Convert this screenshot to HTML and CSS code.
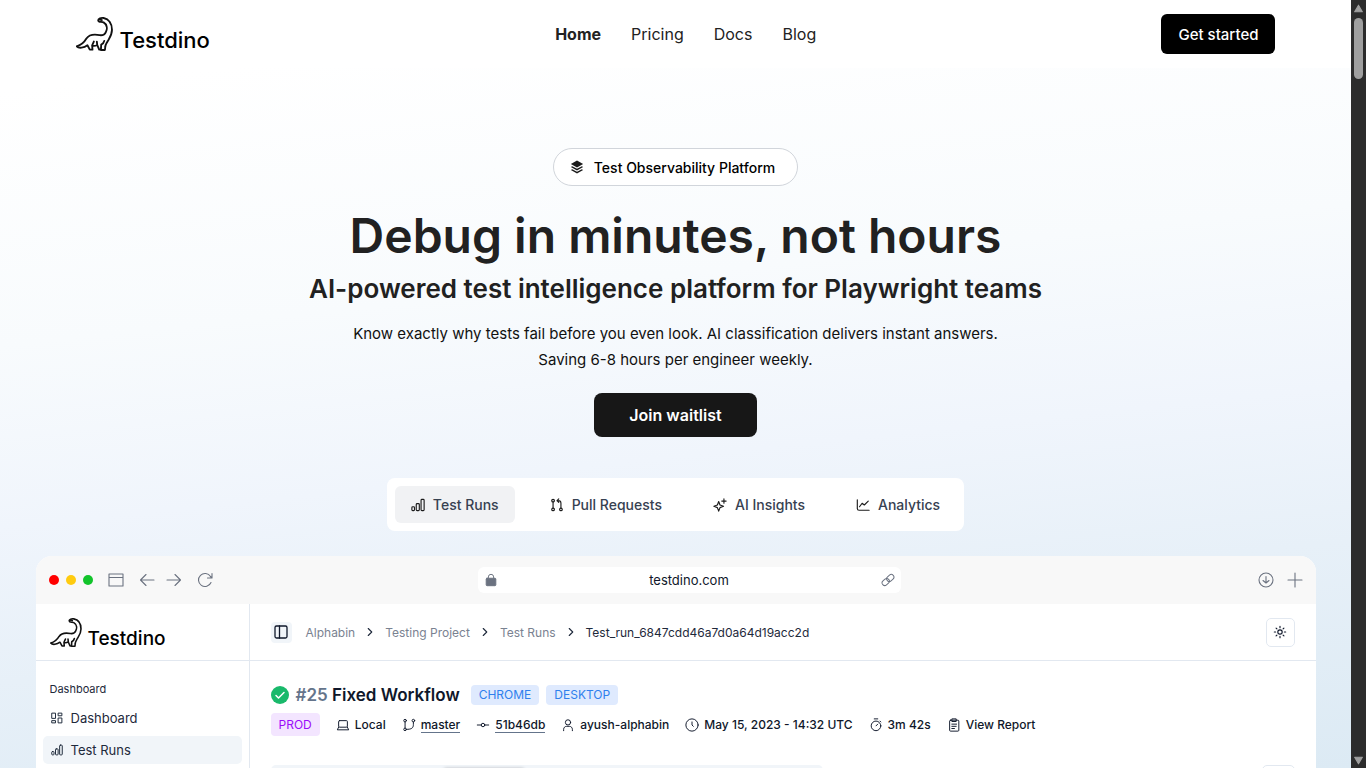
FILE: index.html
```html
<!DOCTYPE html>
<html lang="en">
<head>
    <meta charset="UTF-8" />
    <meta name="viewport" content="width=device-width, initial-scale=1.0" />
    <title>Testdino</title>
    <link rel="stylesheet" href="styles.css">
</head>
<body>
    <!-- Shared icons -->
    <svg class="sprite" aria-hidden="true">
        <symbol id="dino" viewBox="0 0 110 104">
            <path d="M66 10C66 4 74 2 82 3C98 6 107 20 107 38C107 54 100 62 94 72C91 78 87 82 87 89L86 98H74L75 82M66 10C67 17 76 13 82 16C92 22 94 34 89 44C86 52 78 55 70 54C50 50 38 54 31 64C24 76 14 84 2 87C8 94 24 92 34 84L41 97H49L48 84L53 73M48 85C54 87 58 86 63 83L69 97H75M63 83L62 73M75 82C80 80 83 76 84 71M72 8L77 9" />
        </symbol>
        <symbol id="bars" viewBox="0 0 16 16">
            <rect x="1" y="10" width="3" height="4.5" rx="1" />
            <rect x="6" y="6.500" width="3.500" height="8" rx="1" />
            <rect x="11.500" y="1.500" width="3.500" height="13" rx="1" />
        </symbol>
        <symbol id="chevron" viewBox="0 0 16 16">
            <path d="M6 4l4 4-4 4" />
        </symbol>
    </svg>

    <div class="page">
        <header class="site-header">
            <a class="logo" href="#"><svg class="dino"><use href="#dino" /></svg>Testdino</a>
            <nav class="site-nav">
                <a class="active" href="#">Home</a>
                <a href="#">Pricing</a>
                <a href="#">Docs</a>
                <a href="#">Blog</a>
            </nav>
            <button class="get-started" type="button">Get started</button>
        </header>

        <main>
            <section class="hero">
                <div class="badge">
                    <svg class="icon solid" viewBox="0 0 16 16"><path d="M8 .5L15 4.500 8 8.500 1 4.500zM2.500 7L8 10l5.500-3L15 8 8 12 1 8zM2.500 10.500L8 13.500l5.500-3 1.500 1L8 15.500 1 11.500z" /></svg>
                    Test Observability Platform
                </div>
                <h1>Debug in minutes, not hours</h1>
                <h2>AI-powered test intelligence platform for Playwright teams</h2>
                <p>Know exactly why tests fail before you even look. AI classification delivers instant answers.<br>Saving 6-8 hours per engineer weekly.</p>
                <button class="waitlist" type="button">Join waitlist</button>
            </section>

            <div class="tabs">
                <button class="tab selected" type="button"><svg class="icon"><use href="#bars" /></svg>Test Runs</button>
                <button class="tab" type="button">
                    <svg class="icon" viewBox="0 0 16 16"><circle cx="3.500" cy="3" r="1.500" /><circle cx="3.500" cy="13" r="1.500" /><circle cx="12.500" cy="13" r="1.500" /><path d="M3.500 4.500v7M12.500 11.500V6c0-2-1-3-3-3H8M10 1L8 3l2 2" /></svg>
                    Pull Requests
                </button>
                <button class="tab" type="button">
                    <svg class="icon" viewBox="0 0 16 16"><path d="M6.500 4L8 8l4 1.500L8 11l-1.500 4L5 11 1 9.500 5 8zM12.500 1v5M10 3.500h5" /></svg>
                    AI Insights
                </button>
                <button class="tab" type="button">
                    <svg class="icon" viewBox="0 0 16 16"><path d="M1.500 2v10c0 1.500.5 2 2 2H15M4 10l3-4 2.500 2L14 3.500" /></svg>
                    Analytics
                </button>
            </div>

            <section class="browser">
                <div class="browser-bar">
                    <div class="browser-left">
                        <span class="dot red"></span>
                        <span class="dot yellow"></span>
                        <span class="dot green"></span>
                        <svg class="icon window-icon" viewBox="0 0 16 16"><path d="M1 2h14v12H1zM1 5.500h14" /></svg>
                        <svg class="icon back" viewBox="0 0 16 16"><path d="M15 8H1.500M7 2.500L1.500 8 7 13.500" /></svg>
                        <svg class="icon forward" viewBox="0 0 16 16"><path d="M1 8h13.500M9 2.500L14.500 8 9 13.500" /></svg>
                        <svg class="icon reload" viewBox="0 0 16 16"><path d="M14 10.500A6.500 6.500 0 1 1 13.500 4.500L15 6M15 1.500V6h-4.500" /></svg>
                    </div>
                    <div class="address">
                        <svg class="icon" viewBox="0 0 16 16"><rect class="lock-body" x="2.500" y="6" width="11" height="8.500" rx="1" /><path d="M5 6V4.500a3 3 0 0 1 6 0V6" /></svg>
                        <input type="text" aria-label="Address" value="testdino.com">
                        <svg class="icon" viewBox="0 0 16 16"><g transform="rotate(-42 8 8)"><rect x="0" y="5" width="9" height="6" rx="3" /><rect x="7" y="5" width="9" height="6" rx="3" /></g></svg>
                    </div>
                    <div class="browser-right">
                        <svg class="icon" viewBox="0 0 16 16"><circle cx="8" cy="8" r="7" /><path d="M8 4.500v6.500M5 8.500l3 2.500 3-2.500" /></svg>
                        <svg class="icon" viewBox="0 0 16 16"><path d="M8 1v14M1 8h14" /></svg>
                    </div>
                </div>

                <div class="app">
                    <aside class="sidebar">
                        <div class="sidebar-logo"><a class="logo small" href="#"><svg class="dino"><use href="#dino" /></svg>Testdino</a></div>
                        <nav class="side-nav">
                            <span class="side-title">Dashboard</span>
                            <a href="#">
                                <svg class="icon" viewBox="0 0 16 16"><rect x="1.500" y="1.500" width="4.500" height="7" /><rect x="10" y="1.500" width="4.500" height="3.500" /><rect x="1.500" y="11.500" width="4.500" height="3" /><rect x="10" y="8" width="4.500" height="6.500" /></svg>
                                Dashboard
                            </a>
                            <a class="current" href="#"><svg class="icon"><use href="#bars" /></svg>Test Runs</a>
                        </nav>
                    </aside>

                    <div class="content">
                        <div class="topbar">
                            <button class="panel-toggle" type="button" aria-label="Toggle sidebar">
                                <svg class="icon" viewBox="0 0 16 16"><rect x="2" y="2" width="12" height="12" rx="1.500" /><path d="M6.500 2v12" /></svg>
                            </button>
                            <nav class="crumbs">
                                <a href="#">Alphabin</a>
                                <svg class="icon"><use href="#chevron" /></svg>
                                <a href="#">Testing Project</a>
                                <svg class="icon"><use href="#chevron" /></svg>
                                <a href="#">Test Runs</a>
                                <svg class="icon"><use href="#chevron" /></svg>
                                <span>Test_run_6847cdd46a7d0a64d19acc2d</span>
                            </nav>
                            <button class="theme" type="button" aria-label="Toggle theme">
                                <svg class="icon" viewBox="0 0 16 16"><circle cx="8" cy="8" r="2.500" /><path d="M8 1.500v1.500M8 13v1.500M1.500 8H3M13 8h1.500M3.500 3.500l1 1M11.500 11.500l1 1M3.500 12.500l1-1M11.500 4.500l1-1" /></svg>
                            </button>
                        </div>

                        <div class="run">
                            <div class="run-title">
                                <svg class="check" viewBox="0 0 18 18"><circle cx="9" cy="9" r="9" /><path d="M5 9.500l2.500 2.500L13 6.500" /></svg>
                                <h3><span>#25</span> Fixed Workflow</h3>
                                <span class="tag blue">CHROME</span>
                                <span class="tag blue">DESKTOP</span>
                            </div>
                            <div class="run-meta">
                                <span class="tag purple">PROD</span>
                                <span class="meta"><svg class="icon" viewBox="0 0 16 16"><rect x="3" y="3" width="10" height="7.500" rx="1" /><path d="M3 10.500L1.500 13.500h13L13 10.500" /></svg>Local</span>
                                <span class="meta">
                                    <svg class="icon" viewBox="0 0 16 16"><circle cx="3.500" cy="3" r="1.500" /><circle cx="3.500" cy="13" r="1.500" /><circle cx="13" cy="3" r="1.500" /><path d="M3.500 4.500v7M13 4.500v3c0 4-2 5.500-8 5.500" /></svg>
                                    <a href="#">master</a>
                                </span>
                                <span class="meta">
                                    <svg class="icon" viewBox="0 0 16 16"><circle cx="8" cy="8" r="2" /><path d="M1.500 8H6M10 8h4.500" /></svg>
                                    <a href="#">51b46db</a>
                                </span>
                                <span class="meta"><svg class="icon" viewBox="0 0 16 16"><circle cx="8" cy="5" r="3" /><path d="M3 14.500v-1.500c0-2 1.500-3.500 3.500-3.500h3c2 0 3.500 1.500 3.500 3.500v1.500" /></svg>ayush-alphabin</span>
                                <span class="meta"><svg class="icon" viewBox="0 0 16 16"><circle cx="8" cy="8" r="7" /><path d="M8 4.500V8l1.500 1.500" /></svg>May 15, 2023 - 14:32 UTC</span>
                                <span class="meta"><svg class="icon" viewBox="0 0 16 16"><circle cx="8" cy="9" r="5.500" /><path d="M6 1h4M8 9l2-2M12.500 3.500l1 1" /></svg>3m 42s</span>
                                <span class="meta"><svg class="icon" viewBox="0 0 16 16"><rect x="3" y="2.500" width="10.500" height="12.500" rx="1" /><path d="M6 1h4.500v3H6zM5.500 7h5.500M5.500 9.500h5M5.500 12h3" /></svg>View Report</span>
                            </div>
                            <div class="run-tools">
                                <div class="segments"><span class="segment"></span></div>
                                <button class="tool" type="button" aria-label="Options"></button>
                            </div>
                        </div>
                    </div>
                </div>
            </section>
        </main>
    </div>

    <div class="scrollbar" aria-hidden="true">
        <svg viewBox="0 0 10 8"><path d="M5 1L8.500 7h-7z" /></svg>
        <div class="thumb"></div>
        <svg viewBox="0 0 10 8"><path d="M5 7L8.500 1h-7z" /></svg>
    </div>
</body>
</html>
```
FILE: styles.css
```css
* {
    box-sizing: border-box;
}
body {
    margin: 0;
    height: 100vh;
    display: flex;
    overflow: hidden;
    font-family: Inter, "Liberation Sans", sans-serif;
    color: #0f172a;
}
a {
    color: inherit;
    text-decoration: none;
}
button,
input {
    font: inherit;
    color: inherit;
    border: none;
    margin: 0;
    padding: 0;
}
button {
    cursor: pointer;
}
.sprite {
    display: none;
}
.icon {
    width: 14px;
    height: 14px;
    flex: none;
    fill: none;
    stroke: currentColor;
    stroke-width: 1.3;
    stroke-linecap: round;
    stroke-linejoin: round;
}
.icon.solid {
    fill: #1b1b1b;
    stroke: none;
}

/* Page */
.page {
    flex: 1;
    min-width: 0;
    overflow: hidden;
    background: linear-gradient(174deg, #fff 10%, #f8fbfd 38%, #f0f5fc 58%, #e7f0f8 75%, #dceaf4 100%);
}
.site-header {
    height: 68px;
    padding: 0 calc(50% - 600px);
    background: #fff;
    display: flex;
    align-items: center;
    justify-content: space-between;
}
.logo {
    display: flex;
    align-items: flex-end;
    gap: 7px;
    font-size: 22px;
    line-height: 20px;
    font-weight: 500;
    color: #000;
}
.dino {
    width: 37px;
    height: 35px;
    fill: none;
    stroke: #111;
    stroke-width: 5.5;
    stroke-linecap: round;
    stroke-linejoin: round;
}
.logo:not(.small) {
    line-height: 24px;
}
.site-nav {
    display: flex;
    gap: 30px;
    font-size: 16px;
    color: #222;
}
.site-nav .active {
    font-weight: 700;
}
.get-started {
    height: 40px;
    padding: 0 17px;
    border-radius: 6px;
    background: #000;
    color: #fff;
    font-size: 15px;
    font-weight: 500;
}

/* Hero */
.hero {
    padding: 80px 20px 0;
    display: flex;
    flex-direction: column;
    align-items: center;
    text-align: center;
}
.badge {
    height: 38px;
    padding: 0 22px 0 16px;
    display: flex;
    align-items: center;
    gap: 10px;
    border: 1px solid #d1d5db;
    border-radius: 19px;
    background: #fff;
    color: #000;
    font-size: 14px;
    font-weight: 500;
}
h1 {
    margin: 20px 0 0;
    font-size: 48px;
    line-height: 60px;
    font-weight: 600;
    color: #212121;
}
h2 {
    margin: 6px 0 0;
    font-size: 26px;
    line-height: 34px;
    font-weight: 600;
    color: #212121;
}
.hero p {
    margin: 15px 0 0;
    font-size: 15px;
    line-height: 26px;
    color: #111;
}
.waitlist {
    height: 44px;
    margin-top: 20px;
    padding: 0 35px;
    border-radius: 8px;
    background: #171717;
    color: #fff;
    font-size: 16px;
    font-weight: 600;
}

/* Feature tabs */
.tabs {
    width: fit-content;
    margin: 41px auto 0;
    padding: 8px;
    display: flex;
    gap: 19px;
    border-radius: 8px;
    background: #fff;
}
.tab {
    height: 37px;
    padding: 0 16px;
    display: flex;
    align-items: center;
    gap: 8px;
    border-radius: 6px;
    background: none;
    color: #374151;
    font-size: 14px;
    font-weight: 500;
}
.tab .icon {
    color: #1b1b1b;
}
.tab.selected {
    background: #f1f2f4;
}

/* Browser window */
.browser {
    max-width: 1280px;
    margin: 25px auto 0;
    border-radius: 16px 16px 0 0;
    overflow: hidden;
    background: #fff;
}
.browser-bar {
    height: 48px;
    padding: 0 13px;
    display: grid;
    grid-template-columns: 429fr 423fr 402fr;
    align-items: center;
    background: #f8f8f8;
    color: #6b7280;
}
.browser-bar .icon {
    width: 16px;
    height: 16px;
    stroke-width: 1.1;
}
.browser-left {
    display: flex;
    align-items: center;
    gap: 15px;
}
.dot {
    width: 10px;
    height: 10px;
    margin-right: -8px;
    border-radius: 50%;
}
.red {
    background: #f00;
}
.yellow {
    background: #ffcb0f;
}
.green {
    margin-right: 0;
    background: #12c42b;
}
.forward {
    margin-left: -4px;
}
.browser-bar .address {
    height: 26px;
    padding: 0 6px;
    display: flex;
    align-items: center;
    border-radius: 6px;
    background: #fff;
}
.browser-bar .address .icon {
    width: 14px;
    height: 14px;
}
.lock-body {
    fill: #6b7280;
}
.address input {
    flex: 1;
    min-width: 0;
    background: none;
    color: #0f172a;
    text-align: center;
    font-size: 13px;
}
.browser-right {
    display: flex;
    justify-content: flex-end;
    gap: 13px;
}

/* App inside the window */
.app {
    display: flex;
    min-height: 400px;
}
.sidebar {
    width: 214px;
    flex: none;
    border-right: 1px solid #e2e8f0;
}
.sidebar-logo {
    height: 57px;
    padding: 2px 14px 0;
    display: flex;
    align-items: center;
    border-bottom: 1px solid #e2e8f0;
}
.logo.small {
    gap: 6px;
    font-size: 19px;
    line-height: 18px;
}
.small .dino {
    width: 32px;
    height: 30px;
}
.side-nav {
    padding: 20px 7px;
    display: flex;
    flex-direction: column;
    gap: 4px;
    font-size: 13px;
    color: #1e293b;
}
.side-title {
    padding: 0 7px 3px;
    font-size: 11px;
    line-height: 16px;
}
.side-nav a {
    height: 28px;
    padding: 0 8px;
    display: flex;
    align-items: center;
    gap: 8px;
    border-radius: 5px;
}
.side-nav .icon {
    width: 12px;
    height: 12px;
}
.side-nav .current {
    background: #f1f5f9;
}
.content {
    flex: 1;
    min-width: 0;
}
.topbar {
    height: 57px;
    padding: 0 21px;
    display: flex;
    align-items: center;
    border-bottom: 1px solid #e2e8f0;
}
.panel-toggle {
    width: 21px;
    height: 21px;
    display: grid;
    place-items: center;
    border-radius: 4px;
    background: #f1f5f9;
}
.panel-toggle .icon {
    width: 16px;
    height: 16px;
}
.crumbs {
    margin-left: 14px;
    display: flex;
    align-items: center;
    gap: 8px;
    font-size: 12px;
    color: #7a8291;
}
.crumbs .icon,
.crumbs span {
    color: #1e293b;
}
.theme {
    width: 29px;
    height: 29px;
    margin-left: auto;
    display: grid;
    place-items: center;
    border: 1px solid #e2e8f0;
    border-radius: 5px;
    background: #fff;
}
.run {
    padding: 23px 21px;
}
.run-title,
.run-meta,
.meta {
    display: flex;
    align-items: center;
}
.run-title {
    gap: 7px;
}
.check {
    width: 18px;
    height: 18px;
    fill: #19b96b;
}
.check path {
    fill: none;
    stroke: #fff;
    stroke-width: 1.5;
    stroke-linecap: round;
    stroke-linejoin: round;
}
h3 {
    margin: 0 4px 0 0;
    font-size: 17px;
    line-height: 22px;
    font-weight: 600;
}
h3 span {
    color: #64748b;
}
.tag {
    height: 20px;
    padding: 0 8px;
    border-radius: 4px;
    font-size: 12px;
    line-height: 20px;
}
.blue {
    background: #dfeafe;
    color: #2f80ed;
}
.purple {
    height: 23px;
    line-height: 23px;
    background: #f3e5ff;
    color: #9b0bfa;
}
.run-meta {
    margin-top: 7px;
    gap: 16px;
    font-size: 12px;
    font-weight: 500;
}
.run-meta .tag {
    font-weight: 400;
}
.meta {
    gap: 5px;
}
.meta .icon {
    stroke-width: 1.1;
}
.meta a {
    border-bottom: 1px solid #64748b;
}
.run-tools {
    margin-top: 29px;
    display: flex;
    justify-content: space-between;
}
.segments {
    width: 54%;
    height: 36px;
    padding: 3px 0 0 172px;
    border-radius: 5px;
    background: #f1f5f9;
}
.segment {
    display: block;
    width: 82px;
    height: 30px;
    border-radius: 4px;
    background: #fff;
    box-shadow: 0 0 3px #b8bcc2;
}
.tool {
    width: 33px;
    height: 33px;
    border: 1px solid #e2e8f0;
    border-radius: 5px;
    background: #fff;
}

/* Scrollbar */
.scrollbar {
    width: 15px;
    padding: 4px 2px 3px;
    display: flex;
    flex-direction: column;
    align-items: center;
    background: #2c2c2c;
}
.scrollbar svg {
    width: 11px;
    height: 9px;
    flex: none;
    fill: #9f9f9f;
    stroke: #9f9f9f;
    stroke-width: 1;
    stroke-linejoin: round;
}
.thumb {
    width: 9px;
    height: 61px;
    margin: 5px 0 auto;
    border-radius: 5px;
    background: #9f9f9f;
}
```
